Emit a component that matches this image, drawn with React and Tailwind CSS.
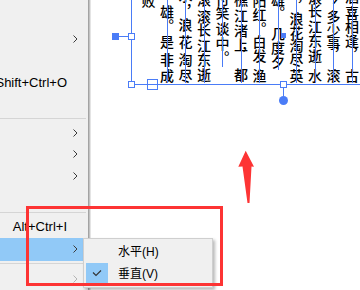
import React from "react";

function Chevron({ color = "#3a3a3a" }) {
  return (
    <svg width="5" height="8" viewBox="0 0 5 8">
      <path d="M0.5 0.5 L4 4 L0.5 7.5" fill="none" stroke={color} strokeWidth="1" />
    </svg>
  );
}

function Row({ shortcut, chev, hl, disabled, tall }) {
  return (
    <div
      className={`flex items-center ${tall ? "h-[24px]" : "h-[22px]"} ${hl ? "bg-[#91c9f7]" : ""}`}
    >
      <div className="flex min-w-0 flex-1 justify-end">
        <span className="whitespace-nowrap leading-none">{shortcut}</span>
      </div>
      <div className="flex w-[21px] shrink-0 items-center pl-[6px]">
        {chev && <Chevron color={disabled ? "#b4b4b4" : "#3a3a3a"} />}
      </div>
    </div>
  );
}

function Sep({ off }) {
  return (
    <div className={`flex h-[7px] flex-col ${off}`}>
      <div className="h-px w-[86px] bg-[#d5d5d5]" />
    </div>
  );
}

const cols = [
  { w: "w-[19px]", line: "", g: [["败", "mt-[6px]"]] },
  {
    w: "w-[18px]",
    line: "h-[83px]",
    g: [["雄", "mt-[17px]"], ["。", "mt-0"], ["是", "mt-[2px]"], ["非", "mt-[4px]"], ["成", "mt-[2px]"]],
  },
  {
    w: "w-[19px]",
    line: "h-[83px]",
    g: [["水", "mt-[1px]"], ["，", "mt-[1px]"], ["浪", "mt-0"], ["花", "mt-[3px]"], ["淘", "mt-[4px]"], ["尽", "mt-[2px]"]],
  },
  {
    w: "w-[18px]",
    line: "h-[83px]",
    g: [["滚", "mt-[5px]"], ["滚", "mt-[3px]"], ["长", "-mt-[1px]"], ["江", "mt-[2px]"], ["东", "mt-0"], ["逝", "mt-[1px]"]],
  },
  {
    w: "w-[19px]",
    line: "h-[67px]",
    g: [["付", "mt-[4px]"], ["笑", "mt-0"], ["谈", "mt-[2px]"], ["中", "mt-[1px]"], ["。", "mt-0"]],
  },
  {
    w: "w-[18px]",
    line: "h-[83px]",
    g: [["樵", "mt-[5px]"], ["江", "mt-[2px]"], ["渚", "mt-[1px]"], ["上", "mt-0"], ["，", "-mt-[5px]"], ["都", "mt-[7px]"]],
  },
  {
    w: "w-[19px]",
    line: "h-[83px]",
    g: [["阳", "mt-[6px]"], ["红", "mt-0"], ["。", "mt-0"], ["白", "-mt-[1px]"], ["发", "mt-0"], ["渔", "mt-[6px]"]],
  },
  {
    w: "w-[18px]",
    line: "h-[70px]",
    g: [["雄", "mt-[5px]"], ["。", "-mt-[1px]"], ["几", "mt-[7px]"], ["度", "mt-0"], ["夕", "mt-0"]],
  },
  {
    w: "w-[19px]",
    line: "h-[83px]",
    g: [["，", "mt-[10px]"], ["浪", "mt-0"], ["花", "mt-0"], ["淘", "-mt-[1px]"], ["尽", "mt-0"], ["英", "mt-[2px]"]],
  },
  {
    w: "w-[18px]",
    line: "h-[83px]",
    g: [["滚", "mt-[3px]"], ["长", "-mt-[1px]"], ["江", "mt-[2px]"], ["东", "mt-0"], ["逝", "mt-[1px]"], ["水", "mt-[6px]"]],
  },
  {
    w: "w-[19px]",
    line: "h-[83px]",
    g: [["今", "mt-[2px]"], ["多", "mt-[6px]"], ["少", "-mt-[1px]"], ["事", "-mt-[1px]"], ["，", "-mt-[3px]"], ["滚", "mt-[8px]"]],
  },
  {
    w: "w-[18px]",
    line: "h-[83px]",
    g: [["酒", "mt-[2px]"], ["喜", "mt-[2px]"], ["相", "mt-0"], ["逢", "mt-0"], ["，", "-mt-[1px]"], ["古", "mt-[8px]"]],
  },
];

export default function App() {
  return (
    <div className="relative flex h-[290px] w-[360px] overflow-hidden bg-white font-['Liberation_Sans','Noto_Sans_CJK_SC',sans-serif] text-black">
      {/* context menu */}
      <div className="flex h-full shrink-0">
        <div className="flex h-full w-[88px] flex-col overflow-hidden bg-[#f0f0f0] pt-[6px] text-[13px]">
          <Row />
          <Row chev />
          <Row />
          <Row shortcut="Shift+Ctrl+O" />
          <Row />
          <Sep off="pt-[3px]" />
          <Row chev />
          <Row chev />
          <Row chev />
          <Row />
          <Sep off="pt-[3px]" />
          <Row shortcut="Alt+Ctrl+I" />
          <Row chev hl tall />
          <Sep off="pt-[2px]" />
          <Row chev disabled />
        </div>
        <div className="w-px bg-[#a3a3a3]" />
        <div className="w-px bg-[#c2c2c2]" />
        <div className="w-px bg-[#e4e4e4]" />
      </div>

      {/* canvas */}
      <div className="relative flex-1 overflow-hidden">
        <div className="-mt-[12px] ml-[48px] flex font-['Noto_Sans_CJK_SC',sans-serif] text-[14px] font-medium text-black">
          {cols.map((c, i) => (
            <div key={i} className={`relative flex shrink-0 flex-col ${c.w}`}>
              {c.g.map(([ch, m], j) => (
                <div key={j} className={`flex h-[14px] w-full justify-center ${m}`}>
                  <span className="leading-[14px] [writing-mode:vertical-rl]">{ch}</span>
                </div>
              ))}
              {c.line && (
                <div className={`absolute left-[9px] top-[12px] w-px bg-[#4a7cf7] ${c.line}`} />
              )}
            </div>
          ))}
        </div>

        {/* selection frame */}
        <div className="absolute left-[40px] top-0 h-[85px] w-px bg-[#4a7cf7]" />
        <div className="absolute left-[40px] right-0 top-[84px] h-px bg-[#4a7cf7]" />
        <div className="absolute left-[21px] top-[33px] h-[7px] w-[7px] bg-[#4a7cf7]" />
        <div className="absolute left-[28px] top-[36px] h-px w-[9px] bg-[#4a7cf7]" />
        <div className="absolute left-[37px] top-[33px] h-[7px] w-[7px] border border-[#4a7cf7] bg-white" />
        <div className="absolute left-[37px] top-[81px] h-[7px] w-[7px] border border-[#4a7cf7] bg-white" />
        <div className="absolute left-[56px] top-[79px] h-[11px] w-[11px] border border-[#4a7cf7]" />
        <div className="absolute left-[189px] top-[81px] h-[7px] w-[7px] border border-[#4a7cf7] bg-white" />
        <div className="absolute left-[190px] top-[33px] h-[5px] w-[5px] bg-[#4a7cf7]" />
        <div className="absolute left-[192px] top-[88px] h-[8px] w-px bg-[#4a7cf7]" />
        <div className="absolute left-[188px] top-[96px] h-[9px] w-[9px] rounded-full bg-[#4a7cf7]" />

        {/* red arrow */}
        <svg className="absolute left-[145px] top-[149px]" width="20" height="56" viewBox="0 0 20 56">
          <polygon
            points="9.7,1.7 18,17.7 15.5,17.5 13.5,54 11.5,54 6.5,17.5 2.3,17.7"
            fill="#fd3434"
          />
        </svg>
      </div>

      {/* submenu */}
      <div className="absolute left-[83px] top-[238px] w-[130px] border border-[#cfcfcf] bg-[#f0f0f0] px-[2px] pb-[2px] pt-[2px] text-[12px] shadow-[2px_2px_3px_rgba(0,0,0,0.28)]">
        <div className="flex h-[22px] items-center">
          <div className="h-[20px] w-[22px]" />
          <span className="ml-[10px] leading-none">水平(H)</span>
        </div>
        <div className="flex h-[22px] items-start">
          <div className="flex h-[20px] w-[22px] items-center justify-center bg-[#91c9f7]">
            <svg width="10" height="8" viewBox="0 0 10 8">
              <path d="M1 3.5 L4 6.5 L9 1.5" fill="none" stroke="#333" strokeWidth="1.1" />
            </svg>
          </div>
          <span className="ml-[10px] self-center leading-none">垂直(V)</span>
        </div>
      </div>

      {/* red annotation box */}
      <div className="pointer-events-none absolute left-[26px] top-[206px] h-[80px] w-[197px] border-[3px] border-[#fd3434]" />
    </div>
  );
}
